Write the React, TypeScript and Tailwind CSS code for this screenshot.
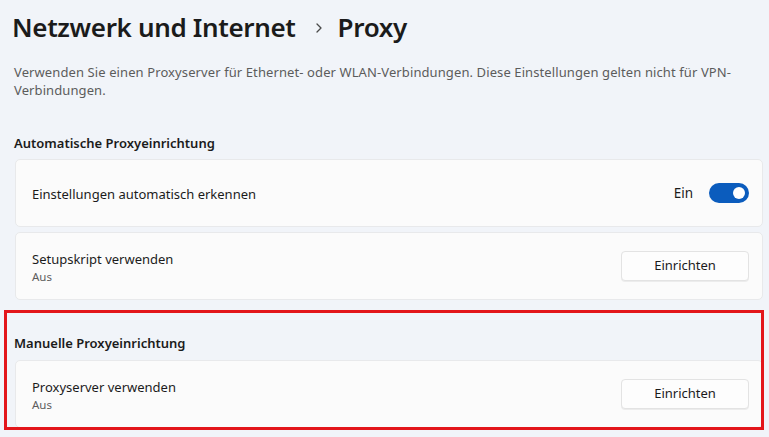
import React from "react";

function Toggle() {
  return (
    <div className="w-10 h-5 rounded-full bg-[#0b5cbd] flex items-center justify-end pr-[4px]">
      <div className="w-3 h-3 rounded-full bg-white" />
    </div>
  );
}

function SetupButton() {
  return (
    <button className="w-32 h-[30px] rounded-[4px] border border-[#e3e3e3] bg-[#fdfdfd] text-[13px] text-[#1b1b1b] shadow-[0_1px_0_rgba(0,0,0,0.06)]">
      Einrichten
    </button>
  );
}

function Card({ title, sub, right }: { title: string; sub?: string; right: React.ReactNode }) {
  return (
    <div className="h-[68px] rounded-[5px] border border-[#e8e9eb] bg-[#fbfbfb] flex items-center justify-between pl-4 pr-[13px]">
      <div className="flex flex-col pt-[2px]">
        <span className="text-[13px] leading-[19px] text-[#1b1b1b]">{title}</span>
        {sub && <span className="text-[11.5px] leading-[16px] text-[#5d5d5d]">{sub}</span>}
      </div>
      {right}
    </div>
  );
}

export default function App() {
  return (
    <div className="relative min-h-screen w-full overflow-hidden bg-[#f1f4f9] font-['Noto_Sans',sans-serif] text-[#1b1b1b]">
      {/* Header */}
      <div className="flex items-center pl-3 pt-[7px] h-[46px]">
        <h1 className="text-[26px] font-semibold leading-[36px] tracking-[-0.35px]">Netzwerk und Internet</h1>
        <svg className="ml-[19px] mr-[15px] mt-[2px]" width="8" height="10" viewBox="0 0 8 10" fill="none">
          <path d="M2 1l4 4-4 4" stroke="#4a4a4a" strokeWidth="1.3" strokeLinecap="round" strokeLinejoin="round" />
        </svg>
        <h1 className="text-[26px] font-semibold leading-[36px] tracking-[-0.35px]">Proxy</h1>
      </div>

      <p className="pl-[14px] pr-3 mt-[17px] text-[13px] leading-[18px] tracking-[0.1px] text-[#5c5c5c]">
        Verwenden Sie einen Proxyserver für Ethernet- oder WLAN-Verbindungen. Diese Einstellungen gelten nicht für VPN-
        <br />
        Verbindungen.
      </p>

      <div className="pl-[15px] pr-[6px]">
        <h2 className="mt-[34px] -ml-[1px] text-[13px] font-semibold leading-[20px] h-[26px]">Automatische Proxyeinrichtung</h2>
        <div className="flex flex-col gap-[5px]">
          <Card
            title="Einstellungen automatisch erkennen"
            right={
              <div className="flex items-center gap-4">
                <span className="text-[13.5px] text-[#1b1b1b]">Ein</span>
                <Toggle />
              </div>
            }
          />
          <Card title="Setupskript verwenden" sub="Aus" right={<SetupButton />} />
        </div>

        <h2 className="mt-[33px] -ml-[1px] text-[13px] font-semibold leading-[20px] h-[27px]">Manuelle Proxyeinrichtung</h2>
        <Card title="Proxyserver verwenden" sub="Aus" right={<SetupButton />} />
      </div>

      {/* Red highlight annotation */}
      <div className="absolute left-[4px] top-[310px] w-[760px] h-[120px] border-[3px] border-[#e3161b] pointer-events-none" />
    </div>
  );
}
